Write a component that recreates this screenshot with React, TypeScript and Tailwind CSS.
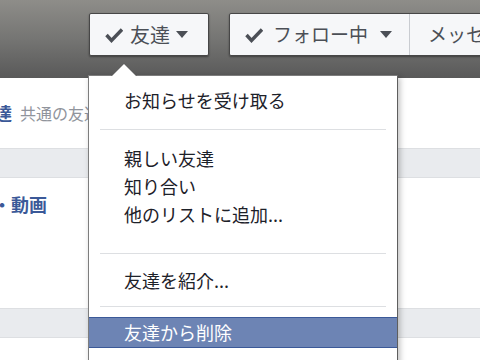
import React from "react";

const font = { fontFamily: '"Noto Sans CJK JP", "Noto Sans", sans-serif' };

function Check() {
  return (
    <svg className="shrink-0" width="18" height="18" viewBox="0 0 18 18" aria-hidden="true">
      <polyline points="1.5,9 6.5,14.5 17,3.5" fill="none" stroke="#4b4f56" strokeWidth="3.4" strokeLinejoin="miter" />
    </svg>
  );
}

function Caret() {
  return (
    <svg className="shrink-0" width="12" height="7" viewBox="0 0 12 7" aria-hidden="true">
      <polygon points="0,0 12,0 6,7" fill="#4b4f56" />
    </svg>
  );
}

function Separator({ className }: { className: string }) {
  return <div className={`mx-[11px] h-px bg-[#dddfe2] ${className}`} />;
}

function Item({ label }: { label: string }) {
  return <div className="flex h-[28px] items-center pl-[35px] text-[18px] text-[#1d2129]">{label}</div>;
}

export default function App() {
  return (
    <div className="relative h-[360px] w-[480px] overflow-hidden bg-white" style={font}>
      {/* cover bottom with action buttons */}
      <div className="h-[78px] overflow-hidden bg-gradient-to-b from-[#8e8d89] via-[#757573] to-[#595959] pl-[89px] pt-[13px]">
        <div className="flex gap-[20px] whitespace-nowrap">
          <button className="flex h-[43px] w-[120px] shrink-0 items-center rounded-[2px] border border-[#474747] bg-[#f6f7f9] pl-[15px] text-[20px] text-[#4b4f56] shadow-[0_1px_2px_rgba(0,0,0,0.4)]">
            <Check />
            <span className="ml-[7px]">友達</span>
            <span className="ml-[6px] flex"><Caret /></span>
          </button>
          <div className="flex h-[43px] w-[300px] shrink-0 rounded-[2px] border border-[#474747] bg-[#f6f7f9] text-[19px] text-[#4b4f56] shadow-[0_1px_2px_rgba(0,0,0,0.4)]">
            <button className="flex w-[180px] shrink-0 items-center border-r border-[#c9ccd1] pl-[15px]">
              <Check />
              <span className="ml-[10px]">フォロー中</span>
              <span className="ml-[12px] flex"><Caret /></span>
            </button>
            <button className="flex items-center pl-[18px]">メッセージ</button>
          </div>
        </div>
      </div>

      {/* page content behind the menu */}
      <div className="flex h-[70px] items-center whitespace-nowrap">
        <span className="-ml-[5px] text-[17px] font-bold text-[#3b5998]">達</span>
        <span className="ml-[8px] text-[16px] text-[#90949c]">共通の友達</span>
      </div>
      <div className="h-[30px] border-y border-[#dddfe2] bg-[#e9ebee]" />
      <div className="h-[130px] pt-[13px] whitespace-nowrap">
        <span className="-ml-[7px] text-[18px] font-bold text-[#3b5998]">・動画</span>
      </div>
      <div className="h-[30px] border-y border-[#dddfe2] bg-[#e9ebee]" />

      {/* dropdown menu */}
      <div className="absolute left-[88px] top-[75px] h-[300px] w-[310px] border border-[#7d7d7d] border-r-[#5e5e5e] bg-white shadow-[2px_2px_6px_rgba(0,0,0,0.25)]">
        <div className="absolute -top-[13px] left-[22px] h-0 w-0 border-x-[13px] border-b-[13px] border-x-transparent border-b-[#5f5f5f]" />
        <div className="absolute -top-[12px] left-[23px] h-0 w-0 border-x-[12px] border-b-[12px] border-x-transparent border-b-white" />
        <div className="pt-[10px]">
          <Item label="お知らせを受け取る" />
          <Separator className="mb-[14px] mt-[15px]" />
          <Item label="親しい友達" />
          <Item label="知り合い" />
          <Item label="他のリストに追加..." />
          <Separator className="mb-[12px] mt-[25px]" />
          <Item label="友達を紹介..." />
          <Separator className="mb-[10px] mt-[12px]" />
          <div className="flex h-[31px] items-center border-y border-[#3b5998] bg-[#6d84b4] pl-[35px] text-[18px] text-white">
            友達から削除
          </div>
        </div>
      </div>
    </div>
  );
}
